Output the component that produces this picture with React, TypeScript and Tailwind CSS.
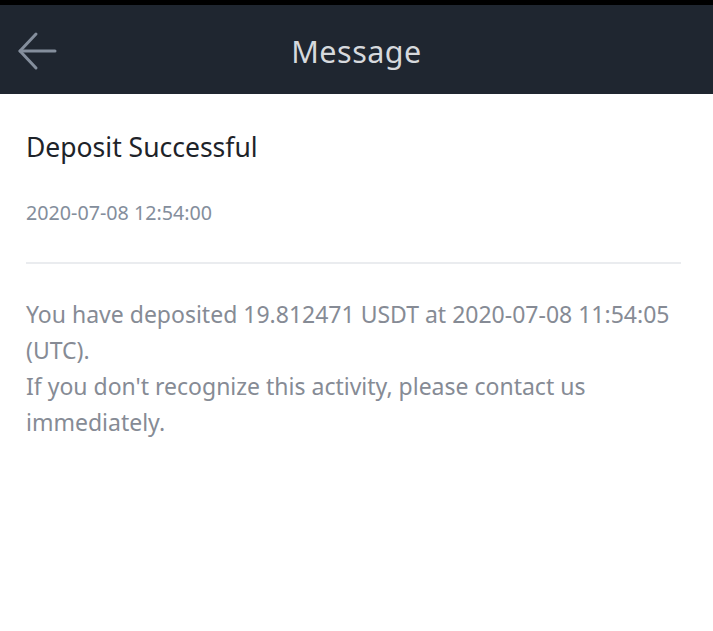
export default function App() {
  return (
    <div className="w-[713px] h-[631px] bg-white overflow-hidden" style={{ fontFamily: '"Noto Sans", sans-serif' }}>
      <div className="h-[5px] bg-black" />
      <header className="relative h-[89px] bg-[#1f2630] flex items-center justify-center">
        <button className="absolute left-[15px] top-[24px] w-[44px] h-[44px] flex items-center justify-center">
          <svg width="42" height="42" viewBox="0 0 42 42" fill="none" stroke="#848e9c" strokeWidth="3" strokeLinecap="round" strokeLinejoin="round">
            <path d="M39 21H4" />
            <path d="M20 4L4 21l16 17" />
          </svg>
        </button>
        <h1 className="pt-[4px] text-[30.5px] text-[#d6d9dd] tracking-[0.5px] leading-none">Message</h1>
      </header>
      <main className="px-[26px]">
        <h2 className="pt-[35px] text-[26.5px] leading-[36px] text-[#1e2329]">Deposit Successful</h2>
        <p className="mt-[36px] text-[19.7px] leading-[24px] text-[#848e9c]">2020-07-08 12:54:00</p>
        <div className="mt-[37px] mr-[6px] h-[2px] bg-[#eaecef]" />
        <div className="mt-[32px] text-[23px] leading-[36px] text-[#868b95]">
          <p>You have deposited 19.812471 USDT at 2020-07-08 11:54:05 (UTC).</p>
          <p>If you don't recognize this activity, please contact us immediately.</p>
        </div>
      </main>
    </div>
  );
}
